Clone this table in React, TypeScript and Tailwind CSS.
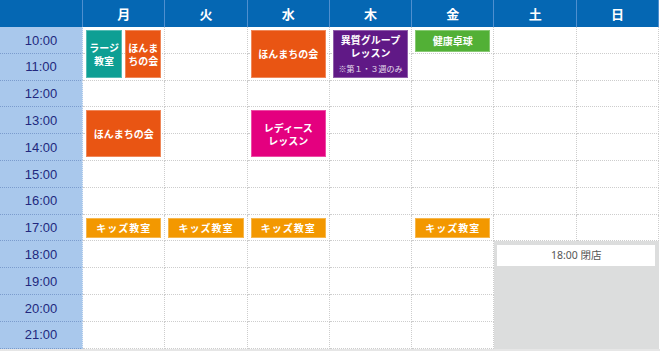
import React from "react";

const DAYS = ["月", "火", "水", "木", "金", "土", "日"];
const TIMES = ["10:00", "11:00", "12:00", "13:00", "14:00", "15:00", "16:00", "17:00", "18:00", "19:00", "20:00", "21:00"];
const COL_START = ["col-start-1", "col-start-2", "col-start-3", "col-start-4", "col-start-5", "col-start-6", "col-start-7", "col-start-8"];
const ROW_START = ["row-start-2", "row-start-3", "row-start-4", "row-start-5", "row-start-6", "row-start-7", "row-start-8", "row-start-9", "row-start-10", "row-start-11", "row-start-12", "row-start-13"];

function Block({ bg, children, className = "" }: { bg: string; children: React.ReactNode; className?: string }) {
  return (
    <div
      className={`flex flex-col items-center justify-center text-center text-white font-bold text-[10px] leading-[13px] border border-white/30 ${bg} ${className}`}
    >
      {children}
    </div>
  );
}

export default function App() {
  return (
    <div className="w-[660px] h-[351px] bg-white overflow-hidden font-['Noto_Sans_CJK_JP',sans-serif]">
      <div className="grid grid-cols-[83px_repeat(7,82.3px)] grid-rows-[27px_repeat(12,26.8px)]">
        {/* header */}
        <div className="col-start-1 row-start-1 bg-[#0567b3] border-r border-[#4f8fcf]" />
        {DAYS.map((d, i) => (
          <div
            key={d}
            className={`${COL_START[i + 1]} row-start-1 bg-[#0567b3] border-r border-[#4f8fcf] flex items-center justify-center text-white font-bold text-[13px]`}
          >
            {d}
          </div>
        ))}

        {/* time column + cells */}
        {TIMES.map((t, r) => (
          <React.Fragment key={t}>
            <div
              className={`${COL_START[0]} ${ROW_START[r]} bg-[#a9c8ec] border-r border-[#e3ebf5] border-b border-dotted border-b-[#7b9ccd] flex items-center justify-center pt-[1px] text-[13px] text-[#22287e] font-['Liberation_Sans',sans-serif]`}
            >
              {t}
            </div>
            {DAYS.map((d, c) => (
              <div
                key={d}
                className={`${COL_START[c + 1]} ${ROW_START[r]} bg-white border-r border-b border-dotted border-[#cdcdcd]`}
              />
            ))}
          </React.Fragment>
        ))}

        {/* Mon 10-11 */}
        <div className="col-start-2 row-start-2 row-span-2 flex gap-[3px] pl-[3px] pr-[4px] py-[3px]">
          <Block bg="bg-[#0e9f94]" className="flex-1">
            <span>ラージ</span>
            <span>教室</span>
          </Block>
          <Block bg="bg-[#e95513]" className="flex-1">
            <span>ほんま</span>
            <span>ちの会</span>
          </Block>
        </div>

        {/* Wed 10-11 */}
        <div className="col-start-4 row-start-2 row-span-2 flex pl-[3px] pr-[4px] py-[3px]">
          <Block bg="bg-[#e95513]" className="flex-1">
            <span>ほんまちの会</span>
          </Block>
        </div>

        {/* Thu 10-11 */}
        <div className="col-start-5 row-start-2 row-span-2 flex pl-[3px] pr-[4px] py-[3px]">
          <Block bg="bg-[#601986]" className="flex-1">
            <span>異質グループ</span>
            <span>レッスン</span>
            <span className="text-[8px] font-normal leading-[12px] text-white/85 mt-[4px]">※第１・３週のみ</span>
          </Block>
        </div>

        {/* Fri 10 */}
        <div className="col-start-6 row-start-2 flex pl-[3px] pr-[4px] pt-[3px] pb-[2px]">
          <Block bg="bg-[#52b036]" className="flex-1">
            <span>健康卓球</span>
          </Block>
        </div>

        {/* Mon 13-14 */}
        <div className="col-start-2 row-start-5 row-span-2 flex pl-[3px] pr-[4px] pt-[3px] pb-[4px]">
          <Block bg="bg-[#e95513]" className="flex-1">
            <span>ほんまちの会</span>
          </Block>
        </div>

        {/* Wed 13-14 */}
        <div className="col-start-4 row-start-5 row-span-2 flex pl-[3px] pr-[4px] pt-[3px] pb-[4px]">
          <Block bg="bg-[#e4007f]" className="flex-1">
            <span>レディース</span>
            <span>レッスン</span>
          </Block>
        </div>

        {/* Kids 17:00 */}
        <div className="col-start-2 row-start-9 flex pl-[3px] pr-[4px] pt-[3px] pb-[3px]">
          <Block bg="bg-[#f39800]" className="flex-1 tracking-[1px]">
            <span>キッズ教室</span>
          </Block>
        </div>
        <div className="col-start-3 row-start-9 flex pl-[3px] pr-[4px] pt-[3px] pb-[3px]">
          <Block bg="bg-[#f39800]" className="flex-1 tracking-[1px]">
            <span>キッズ教室</span>
          </Block>
        </div>
        <div className="col-start-4 row-start-9 flex pl-[3px] pr-[4px] pt-[3px] pb-[3px]">
          <Block bg="bg-[#f39800]" className="flex-1 tracking-[1px]">
            <span>キッズ教室</span>
          </Block>
        </div>
        <div className="col-start-6 row-start-9 flex pl-[3px] pr-[4px] pt-[3px] pb-[3px]">
          <Block bg="bg-[#f39800]" className="flex-1 tracking-[1px]">
            <span>キッズ教室</span>
          </Block>
        </div>

        {/* Closed Sat/Sun */}
        <div className="col-start-7 col-span-2 row-start-10 row-span-4 bg-[#dcdddd] pl-[3px] pr-[4px] pt-[4px]">
          <div className="h-[21px] bg-white flex items-center justify-center text-[10.5px] text-[#555555] font-['Noto_Sans','Noto_Sans_CJK_JP',sans-serif]">
            18:00 閉店
          </div>
        </div>
      </div>
      <div className="h-[3px] bg-[#e6e6e6]" />
    </div>
  );
}
